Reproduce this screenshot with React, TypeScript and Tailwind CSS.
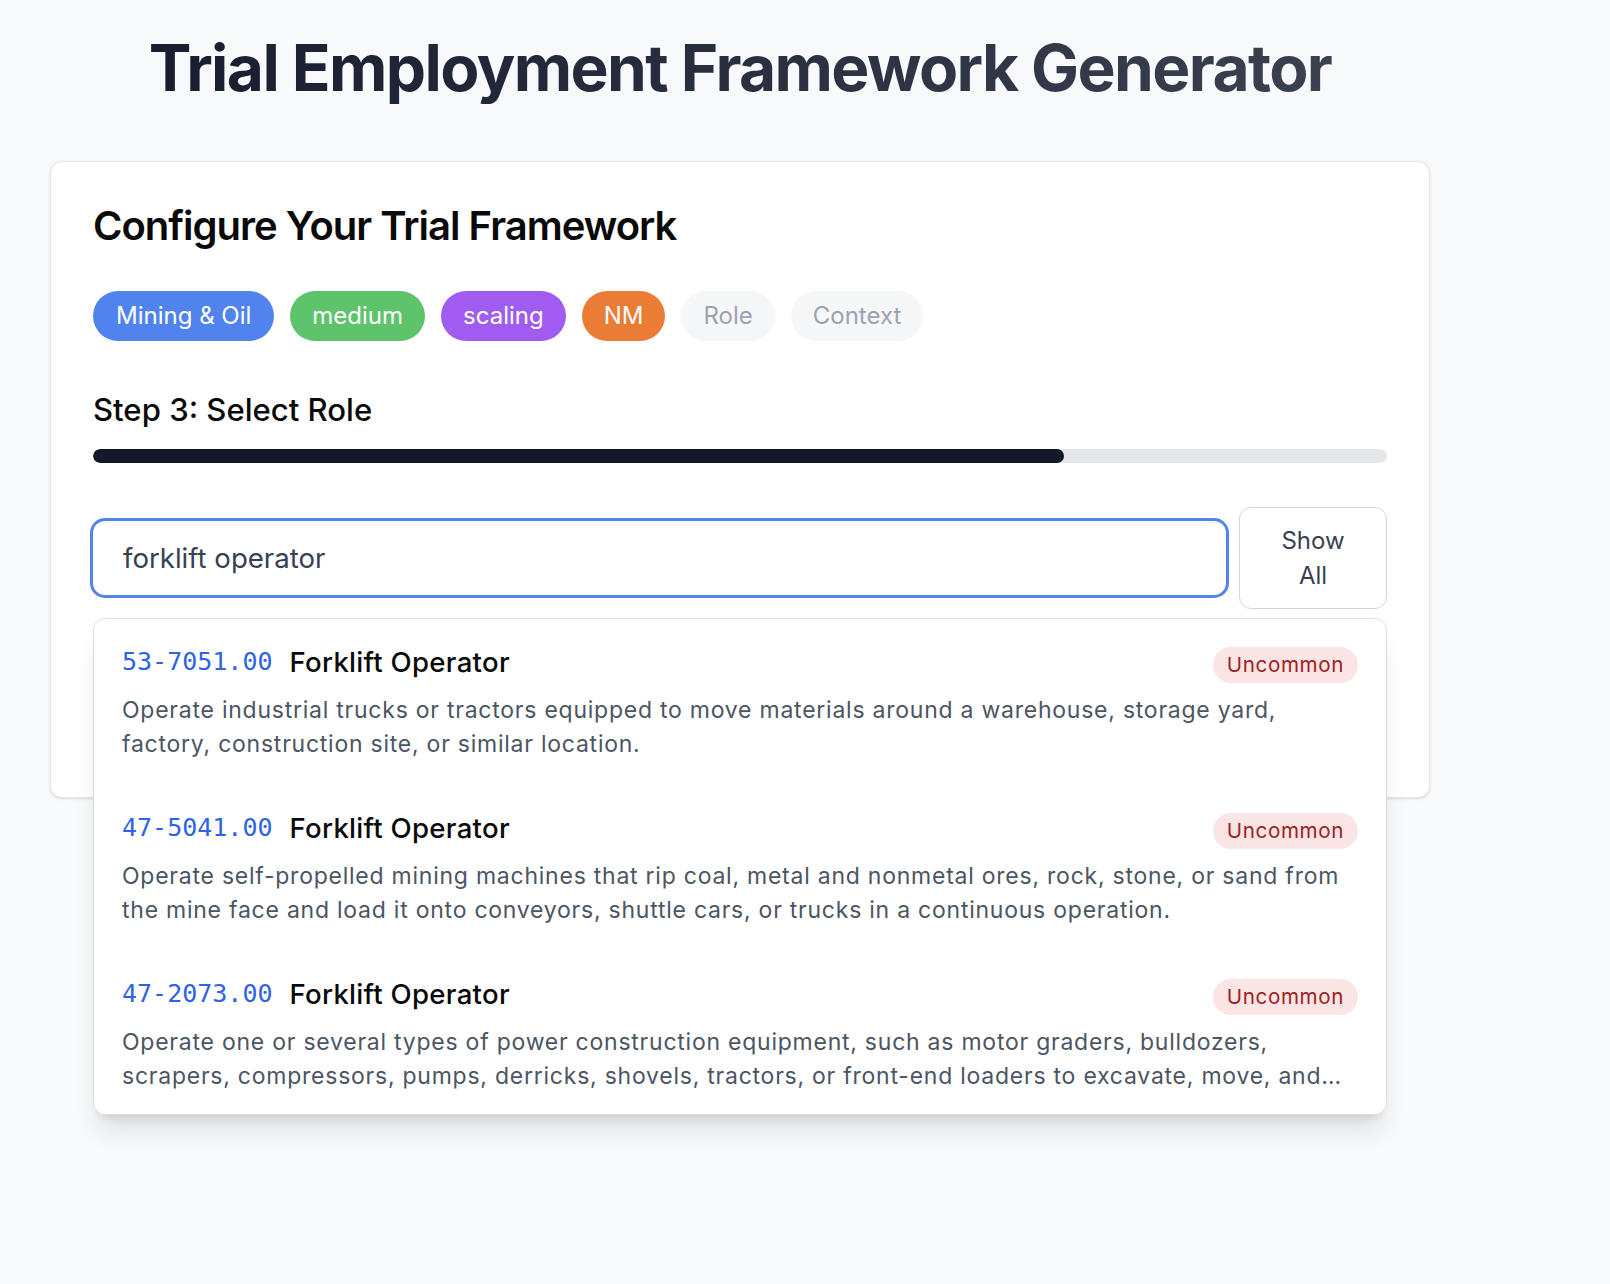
import React from "react";

const tags = [
  { label: "Mining & Oil", cls: "bg-[#5083ee] text-white px-[23px]" },
  { label: "medium", cls: "bg-[#5ec46b] text-white px-[22px]" },
  { label: "scaling", cls: "bg-[#a05cf0] text-white px-[22px]" },
  { label: "NM", cls: "bg-[#eb7c36] text-white px-[22px]" },
  { label: "Role", cls: "bg-[#f6f7f9] text-[#9ca3af] px-[22px]" },
  { label: "Context", cls: "bg-[#f6f7f9] text-[#9ca3af] px-[22px]" },
];

const roles = [
  {
    code: "53-7051.00",
    title: "Forklift Operator",
    desc: "Operate industrial trucks or tractors equipped to move materials around a warehouse, storage yard, factory, construction site, or similar location.",
  },
  {
    code: "47-5041.00",
    title: "Forklift Operator",
    desc: "Operate self-propelled mining machines that rip coal, metal and nonmetal ores, rock, stone, or sand from the mine face and load it onto conveyors, shuttle cars, or trucks in a continuous operation.",
  },
  {
    code: "47-2073.00",
    title: "Forklift Operator",
    desc: "Operate one or several types of power construction equipment, such as motor graders, bulldozers, scrapers, compressors, pumps, derricks, shovels, tractors, or front-end loaders to excavate, move, and grade earth, erect structures, or pour concrete or other hard surface pavement.",
  },
];

function RoleItem({ code, title, desc }: { code: string; title: string; desc: string }) {
  return (
    <div className="px-7 pt-7 pb-[23px]">
      <div className="flex items-start justify-between">
        <div className="flex items-center gap-[17px] leading-[30px]">
          <span className="font-['DejaVu_Sans_Mono',monospace] text-[25px] text-[#2f63e4]">
            {code}
          </span>
          <span className="text-[27.6px] font-medium tracking-[0.01em] text-[#0a0a0a]">
            {title}
          </span>
        </div>
        <span className="rounded-full bg-[#fbe4e4] px-[14px] py-1 text-[20.6px] leading-7 tracking-[0.03em] text-[#9b2323]">
          Uncommon
        </span>
      </div>
      <p className="mt-[10px] line-clamp-2 text-[23px] leading-[34.4px] tracking-[0.033em] text-[#4b5563]">
        {desc}
      </p>
    </div>
  );
}

export default function App() {
  return (
    <div className="min-h-[1284px] bg-[#f8f9fb] font-[Inter,'Noto_Sans',sans-serif] px-[50px] pt-8">
      <div className="w-[1380px]">
        <h1 className="bg-gradient-to-r from-[#151b2c] to-[#3d4452] bg-clip-text text-center text-[64px] font-bold leading-[72px] tracking-tight text-transparent">
          Trial Employment Framework Generator
        </h1>

        <div className="mt-[57px] h-[637px] rounded-xl border border-[#e5e7eb] bg-white px-[42px] pt-[42px] shadow-sm">
          <h2 className="text-[40px] font-semibold leading-[44px] tracking-tight text-[#0a0a0a]">
            Configure Your Trial Framework
          </h2>

          <div className="mt-[43px] flex gap-4">
            {tags.map((t) => (
              <span
                key={t.label}
                className={`flex h-[50px] items-center rounded-full text-[24px] ${t.cls}`}
              >
                {t.label}
              </span>
            ))}
          </div>

          <h3 className="mt-[49px] text-[31.1px] font-medium leading-[40px] text-[#0a0a0a]">
            Step 3: Select Role
          </h3>

          <div className="mt-[19px] h-[14px] w-full overflow-hidden rounded-full bg-[#e5e7eb]">
            <div className="h-full rounded-full bg-[#111827]" style={{ width: `${(3 / 4) * 100}%` }} />
          </div>

          <div className="relative mt-[44px]">
            <div className="flex items-center gap-[13px]">
              <input
                defaultValue="forklift operator"
                className="h-[74px] flex-1 rounded-xl border-0 bg-white px-[30px] text-[27.6px] text-[#374151] outline-none ring-[3px] ring-[#5083ec]"
              />
              <button className="w-[148px] shrink-0 rounded-xl border border-[#d1d5db] bg-white px-[27px] py-[15px] text-center text-[24px] leading-[35px] text-[#374151]">
                Show All
              </button>
            </div>

            <div className="absolute left-0 right-0 top-full z-10 mt-[9px] h-[497px] overflow-hidden rounded-xl border border-[#dcdfe4] bg-white shadow-xl">
              {roles.map((r) => (
                <RoleItem key={r.code} {...r} />
              ))}
            </div>
          </div>
        </div>
      </div>
    </div>
  );
}
